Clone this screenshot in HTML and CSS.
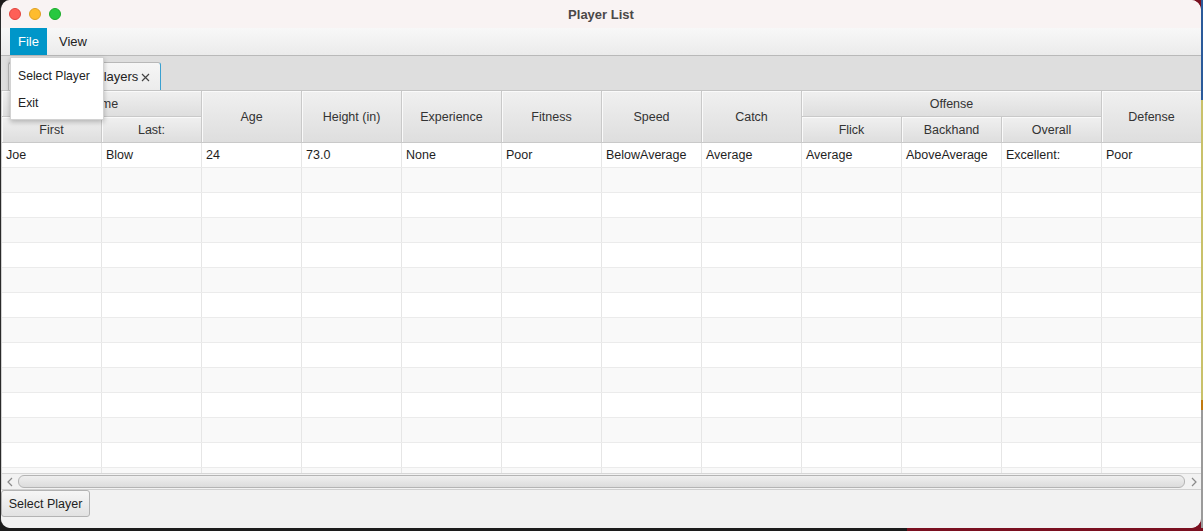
FILE: index.html
```html
<!DOCTYPE html>
<html>
<head>
<meta charset="utf-8">
<title>Player List</title>
<link rel="stylesheet" href="styles.css">
</head>
<body>
<div class="desk">
  <div class="window">
    <div class="titlebar">
      <div class="lights">
        <span class="light red"></span>
        <span class="light yellow"></span>
        <span class="light green"></span>
      </div>
      <div class="title">Player List</div>
    </div>
    <div class="menubar">
      <div class="menu active">File</div>
      <div class="menu">View</div>
    </div>
    <div class="tabbar">
      <div class="tab"><span class="tab-label">Players</span><svg class="tab-close" width="9" height="9" viewBox="0 0 9 9"><path d="M1 1 L8 8 M8 1 L1 8" stroke="#444" stroke-width="1.2" fill="none"/></svg></div>
    </div>
    <div class="table">
      <div class="thead">
        <div class="th span2 r1">Name</div>
        <div class="th c1 r2">First</div>
        <div class="th c2 r2">Last:</div>
        <div class="th tall c3">Age</div>
        <div class="th tall c4">Height (in)</div>
        <div class="th tall c5">Experience</div>
        <div class="th tall c6">Fitness</div>
        <div class="th tall c7">Speed</div>
        <div class="th tall c8">Catch</div>
        <div class="th span3 r1">Offense</div>
        <div class="th c9 r2">Flick</div>
        <div class="th c10 r2">Backhand</div>
        <div class="th c11 r2">Overall</div>
        <div class="th tall c12">Defense</div>
      </div>
      <div class="tbody">
        <div class="row">
          <div class="td">Joe</div><div class="td">Blow</div><div class="td">24</div><div class="td">73.0</div><div class="td">None</div><div class="td">Poor</div><div class="td">BelowAverage</div><div class="td">Average</div><div class="td">Average</div><div class="td">AboveAverage</div><div class="td">Excellent:</div><div class="td">Poor</div>
        </div>
        <div class="row"><div class="td"></div><div class="td"></div><div class="td"></div><div class="td"></div><div class="td"></div><div class="td"></div><div class="td"></div><div class="td"></div><div class="td"></div><div class="td"></div><div class="td"></div><div class="td"></div></div>
        <div class="row"><div class="td"></div><div class="td"></div><div class="td"></div><div class="td"></div><div class="td"></div><div class="td"></div><div class="td"></div><div class="td"></div><div class="td"></div><div class="td"></div><div class="td"></div><div class="td"></div></div>
        <div class="row"><div class="td"></div><div class="td"></div><div class="td"></div><div class="td"></div><div class="td"></div><div class="td"></div><div class="td"></div><div class="td"></div><div class="td"></div><div class="td"></div><div class="td"></div><div class="td"></div></div>
        <div class="row"><div class="td"></div><div class="td"></div><div class="td"></div><div class="td"></div><div class="td"></div><div class="td"></div><div class="td"></div><div class="td"></div><div class="td"></div><div class="td"></div><div class="td"></div><div class="td"></div></div>
        <div class="row"><div class="td"></div><div class="td"></div><div class="td"></div><div class="td"></div><div class="td"></div><div class="td"></div><div class="td"></div><div class="td"></div><div class="td"></div><div class="td"></div><div class="td"></div><div class="td"></div></div>
        <div class="row"><div class="td"></div><div class="td"></div><div class="td"></div><div class="td"></div><div class="td"></div><div class="td"></div><div class="td"></div><div class="td"></div><div class="td"></div><div class="td"></div><div class="td"></div><div class="td"></div></div>
        <div class="row"><div class="td"></div><div class="td"></div><div class="td"></div><div class="td"></div><div class="td"></div><div class="td"></div><div class="td"></div><div class="td"></div><div class="td"></div><div class="td"></div><div class="td"></div><div class="td"></div></div>
        <div class="row"><div class="td"></div><div class="td"></div><div class="td"></div><div class="td"></div><div class="td"></div><div class="td"></div><div class="td"></div><div class="td"></div><div class="td"></div><div class="td"></div><div class="td"></div><div class="td"></div></div>
        <div class="row"><div class="td"></div><div class="td"></div><div class="td"></div><div class="td"></div><div class="td"></div><div class="td"></div><div class="td"></div><div class="td"></div><div class="td"></div><div class="td"></div><div class="td"></div><div class="td"></div></div>
        <div class="row"><div class="td"></div><div class="td"></div><div class="td"></div><div class="td"></div><div class="td"></div><div class="td"></div><div class="td"></div><div class="td"></div><div class="td"></div><div class="td"></div><div class="td"></div><div class="td"></div></div>
        <div class="row"><div class="td"></div><div class="td"></div><div class="td"></div><div class="td"></div><div class="td"></div><div class="td"></div><div class="td"></div><div class="td"></div><div class="td"></div><div class="td"></div><div class="td"></div><div class="td"></div></div>
        <div class="row"><div class="td"></div><div class="td"></div><div class="td"></div><div class="td"></div><div class="td"></div><div class="td"></div><div class="td"></div><div class="td"></div><div class="td"></div><div class="td"></div><div class="td"></div><div class="td"></div></div>
        <div class="row"><div class="td"></div><div class="td"></div><div class="td"></div><div class="td"></div><div class="td"></div><div class="td"></div><div class="td"></div><div class="td"></div><div class="td"></div><div class="td"></div><div class="td"></div><div class="td"></div></div>
      </div>
      <div class="hscroll">
        <span class="arrow">
          <svg width="8" height="10" viewBox="0 0 8 10"><path d="M6 1 L2 5 L6 9" fill="none" stroke="#8a8a8a" stroke-width="1.2"/></svg>
        </span>
        <div class="track"><div class="thumb"></div></div>
        <span class="arrow">
          <svg width="8" height="10" viewBox="0 0 8 10"><path d="M2 1 L6 5 L2 9" fill="none" stroke="#8a8a8a" stroke-width="1.2"/></svg>
        </span>
      </div>
    </div>
    <div class="footer">
      <button class="btn">Select Player</button>
    </div>

    <div class="popup">
      <div class="popup-item">Select Player</div>
      <div class="popup-item">Exit</div>
    </div>
  </div>
  <div class="edge"></div>
</div>
</body>
</html>
```

FILE: styles.css
```css
* { box-sizing: border-box; }
html, body {
  margin: 0;
  padding: 0;
  width: 1203px;
  height: 531px;
  overflow: hidden;
  background: #1d1b1c;
  font-family: "Liberation Sans", Arial, sans-serif;
  font-size: 12.5px;
  color: #222;
}
.desk {
  display: flex;
  height: 531px;
  background: linear-gradient(to right, #1c1c1c 0, #1c1c1c 907px, #7a1020 907px);
}
.window {
  position: relative;
  width: 1201px;
  height: 528px;
  border-left: 1px solid #2a2a2a;
  border-radius: 10px;
  overflow: hidden;
  display: flex;
  flex-direction: column;
  background: #f2f2f2;
}
.edge {
  width: 2px;
  height: 528px;
  background: linear-gradient(to bottom, #2a5a9a 0, #2a5a9a 100px, #c9c16a 100px, #c9c16a 400px, #c07a10 400px, #c07a10 410px, #9a9a9a 410px);
}
.titlebar {
  height: 29px;
  background: #f9f3f3;
  border-bottom: 1px solid #d6d2d2;
  display: flex;
  align-items: center;
  flex-shrink: 0;
}
.lights {
  display: flex;
  gap: 8px;
  padding-left: 8px;
}
.light {
  width: 12px;
  height: 12px;
  border-radius: 50%;
  display: block;
}
.red { background: #fe5f57; border: 0.5px solid #e0443e; }
.yellow { background: #febc2e; border: 0.5px solid #dea123; }
.green { background: #28c840; border: 0.5px solid #1aab29; }
.title {
  flex: 1;
  text-align: center;
  font-weight: bold;
  font-size: 13px;
  color: #4b4848;
  margin-right: 60px;
}
.menubar {
  height: 28px;
  display: flex;
  gap: 4px;
  padding-left: 9px;
  margin-top: -1px;
  background: linear-gradient(#f8f8f8, #ebebeb);
  border-bottom: 1px solid #b9b9b9;
  flex-shrink: 0;
}
.menu {
  padding: 0 8px;
  line-height: 28px;
  font-size: 13px;
  color: #222;
}
.menu.active {
  background: #0096c9;
  color: #fff;
}
.tabbar {
  height: 35px;
  background: #dedede;
  border-bottom: 1px solid #c4c4c4;
  display: flex;
  align-items: flex-end;
  padding-left: 7px;
  flex-shrink: 0;
}
.tab {
  width: 153px;
  height: 28px;
  background: linear-gradient(#f6f6f6, #ececec);
  border: 1px solid #b8b8b8;
  border-right: 1px solid #3aa0d0;
  border-bottom: none;
  border-radius: 3px 3px 0 0;
  display: flex;
  align-items: center;
  padding-left: 86px;
  font-size: 13px;
}
.tab-label { color: #222; }
.tab-close { margin-left: 3px; margin-top: 1px; }

.table {
  flex-shrink: 0;
  display: flex;
  flex-direction: column;
  background: #fff;
  border-left: 1px solid #d0d0d0;
}
.thead {
  display: grid;
  grid-template-columns: repeat(12, 100px);
  grid-template-rows: 26px 26px;
  height: 52px;
}
.th {
  display: flex;
  align-items: center;
  justify-content: center;
  background: linear-gradient(#f0f0f0, #dedede);
  border-right: 1px solid #c9c9c9;
  border-bottom: 1px solid #c9c9c9;
  box-shadow: inset 1px 1px 0 #fafafa;
  color: #333;
  font-size: 12.5px;
}
.tall { grid-row: 1 / 3; }
.r1 { grid-row: 1; }
.r2 { grid-row: 2; }
.span2 { grid-column: 1 / 3; }
.span3 { grid-column: 9 / 12; }
.c1 { grid-column: 1; }
.c2 { grid-column: 2; }
.c3 { grid-column: 3; }
.c4 { grid-column: 4; }
.c5 { grid-column: 5; }
.c6 { grid-column: 6; }
.c7 { grid-column: 7; }
.c8 { grid-column: 8; }
.c9 { grid-column: 9; }
.c10 { grid-column: 10; }
.c11 { grid-column: 11; }
.c12 { grid-column: 12; }

.tbody {
  height: 330px;
  overflow: hidden;
}
.row {
  display: grid;
  grid-template-columns: repeat(12, 100px);
  height: 25px;
  border-bottom: 1px solid #ebebeb;
  background: #fff;
}
.row:nth-child(even) { background: #f9f9f9; }
.td {
  border-right: 1px solid #e6e6e6;
  padding-left: 4px;
  line-height: 24px;
  white-space: nowrap;
  overflow: hidden;
  color: #1e1e1e;
}
.hscroll {
  height: 17px;
  display: flex;
  align-items: center;
  background: #f2f2f2;
  border-top: 1px solid #d6d6d6;
  border-bottom: 1px solid #d0d0d0;
}
.arrow {
  width: 15px;
  display: flex;
  justify-content: center;
}
.track {
  flex: 1;
  padding: 0 1px;
}
.thumb {
  height: 13px;
  border: 1px solid #b4b4b4;
  border-radius: 6px;
  background: linear-gradient(#efefef, #dcdcdc);
}
.footer {
  flex: 1;
  background: #f2f2f2;
}
.btn {
  font-family: "Liberation Sans", Arial, sans-serif;
  font-size: 12.5px;
  color: #222;
  width: 89px;
  height: 27px;
  border: 1px solid #b3b3b3;
  border-radius: 3px;
  background: linear-gradient(#f6f6f6, #e2e2e2);
  padding: 0;
}
.popup {
  position: absolute;
  left: 9px;
  top: 57px;
  width: 94px;
  height: 63px;
  background: #fff;
  border: 1px solid #d2d2d2;
  box-shadow: 0 2px 5px rgba(0, 0, 0, 0.25);
  padding-top: 5px;
}
.popup-item {
  height: 27px;
  line-height: 26px;
  padding-left: 7px;
  color: #222;
  font-size: 12.2px;
}
```
